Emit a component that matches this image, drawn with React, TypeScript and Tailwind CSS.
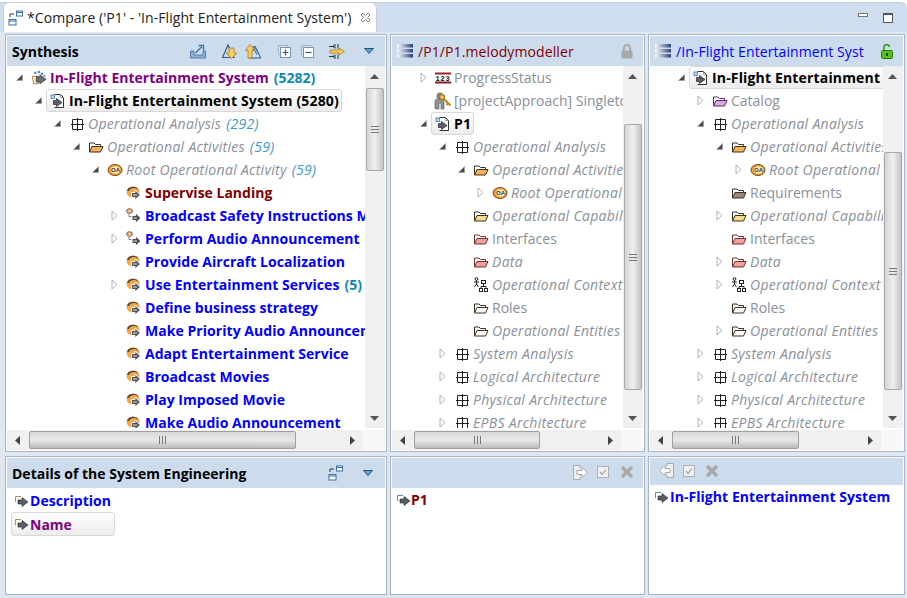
import React from "react";

type Twisty = "open" | "closed" | undefined;

interface RowData {
  level: number;
  twisty?: Twisty;
  icon: React.ReactNode;
  text: string;
  count?: string;
  cls: string;
  selected?: boolean;
}

const GREY = "text-[#8a909a]";
const GREY_I = "text-[#8a909a] italic tracking-[0.3px]";

const TwistyIcon = ({ kind }: { kind: Twisty }) => {
  if (kind === "open")
    return (
      <svg width="7" height="9" viewBox="0 0 7 9" className="shrink-0">
        <path d="M6.5 1.5 V7.5 H0.5 Z" fill="#4a4a4a" stroke="#9a9a9a" strokeWidth="0.6" />
      </svg>
    );
  if (kind === "closed")
    return (
      <svg width="7" height="11" viewBox="0 0 7 11" className="shrink-0">
        <path d="M1 1 L6 5.5 L1 10 Z" fill="#fff" stroke="#aeb2b8" strokeWidth="1" />
      </svg>
    );
  return <span className="w-[7px] shrink-0" />;
};

const GridIcon = () => (
  <svg width="16" height="16" viewBox="0 0 16 16">
    <path d="M3.5 3.5 H13.5 V13.5 H3.5 Z M8.5 2 V15 M2 8.5 H15" fill="none" stroke="#222" strokeWidth="1" />
  </svg>
);

const FolderIcon = ({ fill, line = "#3c3020" }: { fill: string; line?: string }) => (
  <svg width="16" height="16" viewBox="0 0 16 16">
    <path d="M1.5 13 V4 H6 L7.5 5.5 H12.5 V7.5" fill="#fff" stroke={line} />
    <path d="M1.5 13 L4 7.5 H15 L12.5 13 Z" fill={fill} stroke={line} />
  </svg>
);

const OaIcon = () => (
  <svg width="16" height="16" viewBox="0 0 16 16">
    <ellipse cx="8" cy="8" rx="7" ry="5.5" fill="#f29a2e" stroke="#7a4a10" />
    <ellipse cx="8.5" cy="8" rx="4.8" ry="3.8" fill="#fde8c0" />
    <text x="8.5" y="10" fontSize="6" fontWeight="700" textAnchor="middle" fill="#333" fontFamily="Liberation Sans, sans-serif">
      OA
    </text>
  </svg>
);

const ActivityIcon = () => (
  <svg width="16" height="16" viewBox="0 0 16 16">
    <ellipse cx="7" cy="7" rx="6.5" ry="5.5" fill="#f4a648" />
    <path d="M1 6 A6.5 5.5 0 0 1 13 4.5 L11 3.8 A5 3.8 0 0 0 3 6 Z" fill="#5a4a3a" />
    <path d="M5.5 7.5 H9 V5 L14.5 10 L9 15 V12.5 H5.5 Z" fill="#55585e" stroke="#fff" strokeWidth="1" />
    <path d="M7 10 H11" stroke="#ddd" strokeWidth="1" />
  </svg>
);

const CallIcon = () => (
  <svg width="16" height="16" viewBox="0 0 16 16">
    <ellipse cx="3.5" cy="3" rx="3" ry="2.3" fill="#f8c078" stroke="#444" strokeWidth="0.8" />
    <path d="M3 6 V8.5 H5.5" fill="none" stroke="#777" />
    <path d="M6 7.5 H9.5 V5 L15 10 L9.5 15 V12.5 H6 Z" fill="#4c4f55" stroke="#fff" strokeWidth="1" />
    <path d="M7.5 10 H11" stroke="#ddd" strokeWidth="1" />
  </svg>
);

const ModelIcon = () => (
  <svg width="16" height="16" viewBox="0 0 16 16">
    <path d="M4.5 1.5 H10.5 L13.5 4.5 V14.5 H4.5" fill="#fff" stroke="#333" />
    <path d="M10.5 1.5 V4.5 H13.5" fill="none" stroke="#999" />
    <rect x="1" y="2" width="3.5" height="3.5" fill="#bcd8f0" stroke="#3c78b0" strokeWidth="0.8" />
    <path d="M3.5 7.5 H6.5 V5.5 L12 9.5 L6.5 13.5 V11.5 H3.5 Z" fill="#5a6068" stroke="#222" strokeWidth="0.7" />
  </svg>
);

const SystemIcon = () => (
  <svg width="18" height="16" viewBox="0 0 18 16">
    <path d="M1.5 6 H8 V14.5 H3 Z" fill="#fbeed0" stroke="#a87830" />
    <rect x="3.5" y="1" width="2.5" height="2.5" fill="#4a8ac8" />
    <rect x="7.5" y="0" width="2.5" height="2.5" fill="#4a8ac8" />
    <rect x="11" y="2" width="2.5" height="2.5" fill="#4a8ac8" />
    <rect x="14" y="4.5" width="2" height="2" fill="#4a8ac8" />
    <path d="M6 6.5 H10 V4.5 L17 9.5 L10 14.5 V12.5 H6 Z" fill="#6a6e76" stroke="#222" strokeWidth="0.7" />
  </svg>
);

const NumIcon = () => (
  <svg width="16" height="16" viewBox="0 0 16 16">
    <rect x="0" y="2.5" width="16" height="11" fill="#fff" />
    <rect x="0" y="2.5" width="16" height="2" fill="#a02020" />
    <rect x="0" y="11.5" width="16" height="2" fill="#802020" />
    <text x="8" y="10.6" fontSize="7" fontWeight="700" textAnchor="middle" fill="#111" letterSpacing="0.8" fontFamily="Liberation Mono, monospace">
      123
    </text>
  </svg>
);

const KeyIcon = () => (
  <svg width="18" height="18" viewBox="0 0 18 18" className="shrink-0">
    <circle cx="6" cy="4" r="3.5" fill="#7f8486" />
    <path d="M1 17 V9 Q1 7 4 7 H8 Q10 7 10 10 V17 H7 V11 H5 V17 Z" fill="#8f9496" stroke="#555" strokeWidth="0.6" />
    <circle cx="8" cy="5" r="2.4" fill="#f4d070" stroke="#b87818" strokeWidth="1.4" />
    <path d="M10 7 L16.5 13.5 M14 11.5 L12.5 13" stroke="#c88418" strokeWidth="2" />
  </svg>
);

const ContextIcon = () => (
  <svg width="16" height="16" viewBox="0 0 16 16" fill="none" stroke="#222">
    <circle cx="3.5" cy="2" r="1.4" />
    <path d="M3.5 3.5 V7 M1 5 H6 M3.5 7 L1.5 10 M3.5 7 L5.5 10" />
    <rect x="8.5" y="3.5" width="4" height="3" fill="#fff" />
    <rect x="6.5" y="11.5" width="3" height="3" fill="#fff" />
    <rect x="11.5" y="11.5" width="3" height="3" fill="#fff" />
    <path d="M10.5 6.5 V9.5 M8 11.5 V9.5 H13 V11.5" />
  </svg>
);

const LayoutIcon = () => (
  <svg width="16" height="16" viewBox="0 0 16 16" fill="none" stroke="#3a6ea5">
    <rect x="8.5" y="1" width="6" height="5" fill="#fff" />
    <path d="M8.5 2.5 H14.5" />
    <rect x="1" y="9.5" width="7" height="5.5" fill="#fff" />
    <path d="M1 11 H8" />
    <path d="M2 7 V4 H6" stroke="#333" />
  </svg>
);

const Dropdown = () => (
  <svg width="10" height="7" viewBox="0 0 10 7">
    <path d="M0.5 0.5 H9.5 L5 5.5 Z" fill="#5aa8d8" stroke="#25507a" />
  </svg>
);

const StackIcon = () => (
  <svg width="16" height="16" viewBox="0 0 16 16">
    <defs>
      <linearGradient id="stk" x1="0" x2="1" y1="0" y2="0">
        <stop offset="0" stopColor="#fff" />
        <stop offset="1" stopColor="#2a3f7a" />
      </linearGradient>
    </defs>
    <rect x="0" y="1" width="16" height="3.5" fill="url(#stk)" />
    <rect x="0" y="6" width="16" height="3.5" fill="url(#stk)" />
    <rect x="0" y="11" width="16" height="3.5" fill="url(#stk)" />
  </svg>
);

const LockIcon = ({ open }: { open?: boolean }) => (
  <svg width="12" height="15" viewBox="0 0 12 15">
    {open ? (
      <>
        <path d="M3 7 V4 A2.8 2.8 0 0 1 8.6 3" fill="none" stroke="#2f9a10" strokeWidth="1.6" />
        <rect x="0.5" y="6.5" width="11" height="8" rx="1" fill="#56c020" stroke="#2a7a10" />
        <rect x="5" y="9" width="2" height="3" fill="#16500a" />
      </>
    ) : (
      <>
        <path d="M3 7 V4 A3 3 0 0 1 9 4 V7" fill="none" stroke="#a8a8a8" strokeWidth="1.8" />
        <rect x="0.5" y="6.5" width="11" height="8" rx="1" fill="#a8a8a8" />
      </>
    )}
  </svg>
);

const ExportIcon = () => (
  <svg width="16" height="16" viewBox="0 0 16 16" fill="none">
    <path d="M1 8 H4 V12 H13 V8 H15.5 V15 H0.5 V8 Z" fill="#8fb0d4" stroke="#3a6ea5" strokeWidth="0.8" />
    <path d="M5.5 10 L12 3.5" stroke="#3a6ea5" strokeWidth="1.3" />
    <path d="M8.5 2.5 H13.5 V7.5" stroke="#3a6ea5" strokeWidth="1.3" />
  </svg>
);

const TriIcon = ({ up }: { up?: boolean }) => (
  <svg width="16" height="16" viewBox="0 0 16 16">
    {up ? (
      <>
        <path d="M9 3 L4 15 H16 Z" fill="none" stroke="#2a5a90" />
        <path d="M8 4 L12 12 M10 3 L14 11" stroke="#3a6ea5" />
        <path d="M3 15 V7.5 H0.5 L5 1.5 L9.5 7.5 H7 V15 Z" fill="#f6cd60" stroke="#a87a18" strokeWidth="0.8" />
      </>
    ) : (
      <>
        <path d="M6 2 L0.5 14.5 H12 Z" fill="none" stroke="#2a5a90" strokeWidth="1.2" />
        <path d="M7 5 H12 V10 H15 L9.5 15.5 L4 10 H7 Z" fill="#f6cd60" stroke="#a87a18" strokeWidth="0.8" />
      </>
    )}
  </svg>
);

const BoxIcon = ({ plus }: { plus?: boolean }) => (
  <svg width="13" height="13" viewBox="0 0 13 13">
    <rect x="0.5" y="0.5" width="9" height="9" fill="#dde6f0" stroke="#9fb4c8" />
    <rect x="2.5" y="2.5" width="10" height="10" fill="#fff" stroke="#7a94ae" />
    <path d={plus ? "M4.5 7.5 H10.5 M7.5 4.5 V10.5" : "M4.5 7.5 H10.5"} stroke="#2a5a90" strokeWidth="1.2" />
  </svg>
);

const FilterIcon = () => (
  <svg width="16" height="15" viewBox="0 0 16 15" fill="none">
    <path d="M0 2.5 H5 M0 12.5 H5 M6 0 V4.5 M6 10.5 V15 M9 0 V4.5 M9 10.5 V15" stroke="#333" />
    <path d="M3 2.5 L5 1 V4 Z M3 12.5 L5 11 V14 Z" fill="#333" />
    <path d="M1 6 H10 V4 L15.5 7.5 L10 11 V9 H1 Z" fill="#f6cd60" stroke="#a87a18" strokeWidth="0.8" />
  </svg>
);

const DocArrow = ({ left }: { left?: boolean }) => (
  <svg width="15" height="15" viewBox="0 0 15 15" fill="none">
    <g transform={left ? "" : "matrix(-1 0 0 1 15 0)"}>
      <path d="M8 3 V0.5 H14.5 V14.5 H8 V12" fill="#eee" stroke="#aaa" />
      <path d="M0.5 7.5 L6 2.5 V5.5 H11 V9.5 H6 V12.5 Z" fill="#fff" stroke="#aaa" />
    </g>
  </svg>
);

const CheckBox = () => (
  <svg width="12" height="12" viewBox="0 0 12 12">
    <rect x="0.5" y="0.5" width="11" height="11" fill="#f0f0f0" stroke="#b0b0b0" />
    <path d="M3 6 L5 8.5 L9 3.5" fill="none" stroke="#a0a0a0" strokeWidth="1.2" />
  </svg>
);

const CrossIcon = () => (
  <svg width="14" height="14" viewBox="0 0 14 14">
    <path d="M2 2 L12 12 M12 2 L2 12" stroke="#a8a8a8" strokeWidth="3.4" />
  </svg>
);

const ElementIcon = ({ frame }: { frame: string }) => (
  <svg width="14" height="14" viewBox="0 0 14 14" className="shrink-0">
    <path d="M0.5 8 V2.5 H6" fill="none" stroke={frame} />
    <path d="M3 6 H7 V3.5 L13 8 L7 12.5 V10 H3 Z" fill="#5a5e66" stroke="#222" strokeWidth="0.6" />
  </svg>
);

const Row = ({ level, twisty, icon, text, count, cls, selected }: RowData) => (
  <div className="h-[23px] flex items-center whitespace-nowrap" style={{ paddingLeft: 9 + 19 * level }}>
    <TwistyIcon kind={twisty} />
    <div
      className={`ml-[4px] pl-[3px] h-[23px] flex items-center rounded-[3px] border ${
        selected ? "border-[#d8d8d8] bg-gradient-to-b from-white to-[#ececec]" : "border-transparent"
      }`}
    >
      <span className="w-[16px] h-[16px] shrink-0 flex items-center justify-center">{icon}</span>
      <span className={`ml-[3px] pr-[2px] ${cls}`}>
        {text}
        {count && (
          <span className={cls.includes("italic") ? "ml-[5px] text-[#3a9ac8]" : "ml-[5px] text-[#0a8ab0]"}>{count}</span>
        )}
      </span>
    </div>
  </div>
);

const Grip = ({ vertical }: { vertical?: boolean }) => (
  <div className={vertical ? "flex flex-col gap-[2px]" : "flex gap-[2px]"}>
    {[0, 1, 2].map((i) => (
      <span key={i} className={vertical ? "block w-[8px] h-px bg-[#777]" : "block w-px h-[8px] bg-[#777]"} />
    ))}
  </div>
);

const VScroll = ({ top, height }: { top: number; height: number }) => (
  <div className="w-[20px] shrink-0 bg-[#f0f0f0] flex flex-col relative">
    <svg width="9" height="5" viewBox="0 0 9 5" className="absolute left-[5px] top-[8px]">
      <path d="M0 5 L4.5 0 L9 5 Z" fill="#555" />
    </svg>
    <div
      className="mx-px border border-[#a8a8a8] rounded-[2px] bg-gradient-to-r from-[#d4d4d4] via-[#f0f0f0] to-[#c4c4c4] flex items-center justify-center"
      style={{ marginTop: top, height }}
    >
      <Grip vertical />
    </div>
    <svg width="9" height="5" viewBox="0 0 9 5" className="absolute left-[5px] bottom-[7px]">
      <path d="M0 0 L4.5 5 L9 0 Z" fill="#555" />
    </svg>
  </div>
);

const HScroll = ({ start, width }: { start: number; width: number }) => (
  <div className="h-[20px] mt-[2px] shrink-0 flex">
    <div className="flex-1 bg-[#f0f0f0] flex relative items-center">
      <svg width="5" height="9" viewBox="0 0 5 9" className="absolute left-[8px]">
        <path d="M5 0 L0 4.5 L5 9 Z" fill="#444" />
      </svg>
      <div
        className="h-[18px] border border-[#a0a0a0] rounded-[2px] bg-gradient-to-b from-[#d8d8d8] via-[#e8e8e8] to-[#bcbcbc] flex items-center justify-center"
        style={{ marginLeft: start, width }}
      >
        <Grip />
      </div>
      <svg width="5" height="9" viewBox="0 0 5 9" className="absolute right-[8px]">
        <path d="M0 0 L5 4.5 L0 9 Z" fill="#444" />
      </svg>
    </div>
    <div className="w-[22px] bg-[#f8f8f8]" />
  </div>
);

const TreePane = ({
  head,
  rows,
  vTop,
  vHeight,
  hStart,
  hWidth,
}: {
  head: React.ReactNode;
  rows: RowData[];
  vTop: number;
  vHeight: number;
  hStart: number;
  hWidth: number;
}) => (
  <div className="border border-[#a9b5c5] bg-white p-px flex flex-col min-h-0">
    <div className="h-[30px] shrink-0 bg-[#cddced] flex items-center">{head}</div>
    <div className="h-[362px] shrink-0 flex">
      <div className="flex-1 min-w-0 overflow-hidden">
        {rows.map((r, i) => (
          <Row key={i} {...r} />
        ))}
      </div>
      <VScroll top={vTop} height={vHeight} />
    </div>
    <HScroll start={hStart} width={hWidth} />
  </div>
);

const oa = (level: number, twisty: Twisty, icon: React.ReactNode, text: string, italic = true): RowData => ({
  level,
  twisty,
  icon,
  text,
  cls: italic ? GREY_I : GREY,
});

const orangeFolder = <FolderIcon fill="#f6b056" />;
const yellowFolder = <FolderIcon fill="#f8dc88" />;
const redFolder = <FolderIcon fill="#f4a0a0" line="#703030" />;
const greyFolder = <FolderIcon fill="#fff" />;
const brownFolder = <FolderIcon fill="#9a8878" />;
const purpleFolder = <FolderIcon fill="#d8a8e0" line="#602870" />;

const blue = "font-bold text-[#0000ff] tracking-[0.05px]";
const black = "font-bold text-black tracking-[0.16px]";

const synthesisRows: RowData[] = [
  { level: 0, twisty: "open", icon: <SystemIcon />, text: "In-Flight Entertainment System", count: "(5282)", cls: "font-bold text-[#800080]" },
  { level: 1, twisty: "open", icon: <ModelIcon />, text: "In-Flight Entertainment System (5280)", cls: black, selected: true },
  { level: 2, twisty: "open", icon: <GridIcon />, text: "Operational Analysis", count: "(292)", cls: GREY_I },
  { level: 3, twisty: "open", icon: orangeFolder, text: "Operational Activities", count: "(59)", cls: GREY_I },
  { level: 4, twisty: "open", icon: <OaIcon />, text: "Root Operational Activity", count: "(59)", cls: GREY_I },
  { level: 5, icon: <ActivityIcon />, text: "Supervise Landing", cls: "font-bold text-[#800000]" },
  { level: 5, twisty: "closed", icon: <CallIcon />, text: "Broadcast Safety Instructions Messages", cls: blue },
  { level: 5, twisty: "closed", icon: <CallIcon />, text: "Perform Audio Announcement", cls: blue },
  { level: 5, icon: <ActivityIcon />, text: "Provide Aircraft Localization", cls: blue },
  { level: 5, twisty: "closed", icon: <ActivityIcon />, text: "Use Entertainment Services", count: "(5)", cls: blue },
  { level: 5, icon: <ActivityIcon />, text: "Define business strategy", cls: blue },
  { level: 5, icon: <ActivityIcon />, text: "Make Priority Audio Announcement", cls: blue },
  { level: 5, icon: <ActivityIcon />, text: "Adapt Entertainment Service", cls: blue },
  { level: 5, icon: <ActivityIcon />, text: "Broadcast Movies", cls: blue },
  { level: 5, icon: <ActivityIcon />, text: "Play Imposed Movie", cls: blue },
  { level: 5, icon: <ActivityIcon />, text: "Make Audio Announcement", cls: blue },
];

const archRows: RowData[] = [
  oa(2, "closed", <GridIcon />, "System Analysis"),
  oa(2, "closed", <GridIcon />, "Logical Architecture"),
  oa(2, "closed", <GridIcon />, "Physical Architecture"),
  oa(2, "closed", <GridIcon />, "EPBS Architecture"),
];

const middleRows: RowData[] = [
  oa(1, "closed", <NumIcon />, "ProgressStatus", false),
  oa(1, undefined, <KeyIcon />, "[projectApproach] SingletonComponents", false),
  { level: 1, twisty: "open", icon: <ModelIcon />, text: "P1", cls: black, selected: true },
  oa(2, "open", <GridIcon />, "Operational Analysis"),
  oa(3, "open", orangeFolder, "Operational Activities"),
  oa(4, "closed", <OaIcon />, "Root Operational Activity"),
  oa(3, undefined, yellowFolder, "Operational Capabilities"),
  oa(3, undefined, redFolder, "Interfaces", false),
  oa(3, undefined, redFolder, "Data"),
  oa(3, undefined, <ContextIcon />, "Operational Context"),
  oa(3, undefined, greyFolder, "Roles", false),
  oa(3, undefined, greyFolder, "Operational Entities"),
  ...archRows,
];

const rightRows: RowData[] = [
  { level: 1, twisty: "open", icon: <ModelIcon />, text: "In-Flight Entertainment System (5280)", cls: black, selected: true },
  oa(2, "closed", purpleFolder, "Catalog", false),
  oa(2, "open", <GridIcon />, "Operational Analysis"),
  oa(3, "open", orangeFolder, "Operational Activities"),
  oa(4, "closed", <OaIcon />, "Root Operational Activity"),
  oa(3, undefined, brownFolder, "Requirements", false),
  oa(3, "closed", yellowFolder, "Operational Capabilities"),
  oa(3, undefined, redFolder, "Interfaces", false),
  oa(3, "closed", redFolder, "Data"),
  oa(3, "closed", <ContextIcon />, "Operational Context"),
  oa(3, undefined, greyFolder, "Roles", false),
  oa(3, "closed", greyFolder, "Operational Entities"),
  ...archRows,
];

export default function App() {
  return (
    <div
      className="w-[907px] h-[598px] bg-white text-[14px] overflow-hidden flex flex-col"
      style={{ fontFamily: '"Open Sans", "Noto Sans", sans-serif' }}
    >
      {/* tab strip */}
      <div className="mt-[2px] h-[30px] shrink-0 flex bg-[#cfdeee] border-t border-[#c8ccd4] rounded-tr-[6px]">
        <div className="ml-[3px] w-[374px] bg-white rounded-t-[6px] flex items-center border-x border-[#c8ccd4]">
          <span className="ml-[4px]">
            <LayoutIcon />
          </span>
          <span className="ml-[3px] text-[#222] tracking-[0.06px] whitespace-nowrap">*Compare ('P1' - 'In-Flight Entertainment System')</span>
          <svg width="11" height="11" viewBox="0 0 11 11" className="ml-auto mr-[5px]" fill="none" stroke="#888">
            <path d="M1 3 L3 1 L5.5 3.5 L8 1 L10 3 L7.5 5.5 L10 8 L8 10 L5.5 7.5 L3 10 L1 8 L3.5 5.5 Z" />
          </svg>
        </div>
        <div className="ml-auto mr-[14px] flex items-center gap-[15px]">
          <span className="w-[10px] h-[4px] mb-[6px] border border-[#777] bg-white" />
          <span className="w-[10px] h-[10px] border border-[#555] border-t-[2px] bg-white" />
        </div>
      </div>

      {/* panes */}
      <div className="flex-1 min-h-0 bg-[#dfe8f2] px-[5px] pb-[3px] grid grid-cols-[382px_255px_257px] grid-rows-[418px_139px] gap-x-[3px] gap-y-[4px] pt-[2px]">
        <TreePane
          rows={synthesisRows}
          vTop={22}
          vHeight={83}
          hStart={22}
          hWidth={267}
          head={
            <>
              <span className="ml-[5px] font-bold text-black">Synthesis</span>
              <div className="ml-auto mr-[11px] flex items-center">
                <ExportIcon />
                <span className="ml-[16px]"><TriIcon /></span>
                <span className="ml-[7px]"><TriIcon up /></span>
                <span className="ml-[17px]"><BoxIcon plus /></span>
                <span className="ml-[10px]"><BoxIcon /></span>
                <span className="ml-[15px]"><FilterIcon /></span>
                <span className="ml-[19px]"><Dropdown /></span>
              </div>
            </>
          }
        />
        <TreePane
          rows={middleRows}
          vTop={58}
          vHeight={266}
          hStart={22}
          hWidth={126}
          head={
            <>
              <span className="ml-[5px]"><StackIcon /></span>
              <span className="ml-[5px] text-[#800000] tracking-[0.1px] whitespace-nowrap">/P1/P1.melodymodeller</span>
              <span className="ml-auto mr-[10px]"><LockIcon /></span>
            </>
          }
        />
        <TreePane
          rows={rightRows}
          vTop={86}
          vHeight={238}
          hStart={22}
          hWidth={127}
          head={
            <>
              <span className="ml-[5px]"><StackIcon /></span>
              <span className="ml-[5px] text-[#0000ff] tracking-[0.08px] whitespace-nowrap">/In-Flight Entertainment Syst</span>
              <span className="ml-auto mr-[10px]"><LockIcon open /></span>
            </>
          }
        />

        <div className="border border-[#a9b5c5] bg-white p-px flex flex-col">
          <div className="h-[30px] shrink-0 bg-[#cddced] flex items-center">
            <span className="ml-[5px] font-bold text-black">Details of the System Engineering</span>
            <span className="ml-auto"><LayoutIcon /></span>
            <span className="ml-[19px] mr-[12px]"><Dropdown /></span>
          </div>
          <div className="pl-[4px] pt-px">
            <div className="h-[23px] flex items-center pl-[3px] border border-transparent">
              <ElementIcon frame="#b09060" />
              <span className={`ml-px ${blue}`}>Description</span>
            </div>
            <div className="w-[104px] h-[24px] flex items-center pl-[3px] border border-[#d8d8d8] rounded-[3px] bg-gradient-to-b from-white to-[#ececec]">
              <ElementIcon frame="#b09060" />
              <span className="ml-px font-bold text-[#800080]">Name</span>
            </div>
          </div>
        </div>

        <div className="border border-[#a9b5c5] bg-white p-px flex flex-col">
          <div className="h-[30px] shrink-0 bg-[#cddced] flex items-center justify-end pr-[9px] pb-[2px] gap-[9px]">
            <DocArrow />
            <CheckBox />
            <span className="ml-[2px]"><CrossIcon /></span>
          </div>
          <div className="pl-[5px] h-[23px] flex items-center">
            <ElementIcon frame="#5a8ab0" />
            <span className="font-bold text-[#800000]">P1</span>
          </div>
        </div>

        <div className="border border-[#a9b5c5] bg-white p-px flex flex-col">
          <div className="h-[27px] shrink-0 bg-[#cddced] flex items-center pl-[9px] pb-[2px] gap-[9px]">
            <DocArrow left />
            <CheckBox />
            <span className="ml-[1px]"><CrossIcon /></span>
          </div>
          <div className="pl-[5px] h-[23px] flex items-center">
            <ElementIcon frame="#5a8ab0" />
            <span className={`ml-px ${blue}`}>In-Flight Entertainment System</span>
          </div>
        </div>
      </div>
    </div>
  );
}
